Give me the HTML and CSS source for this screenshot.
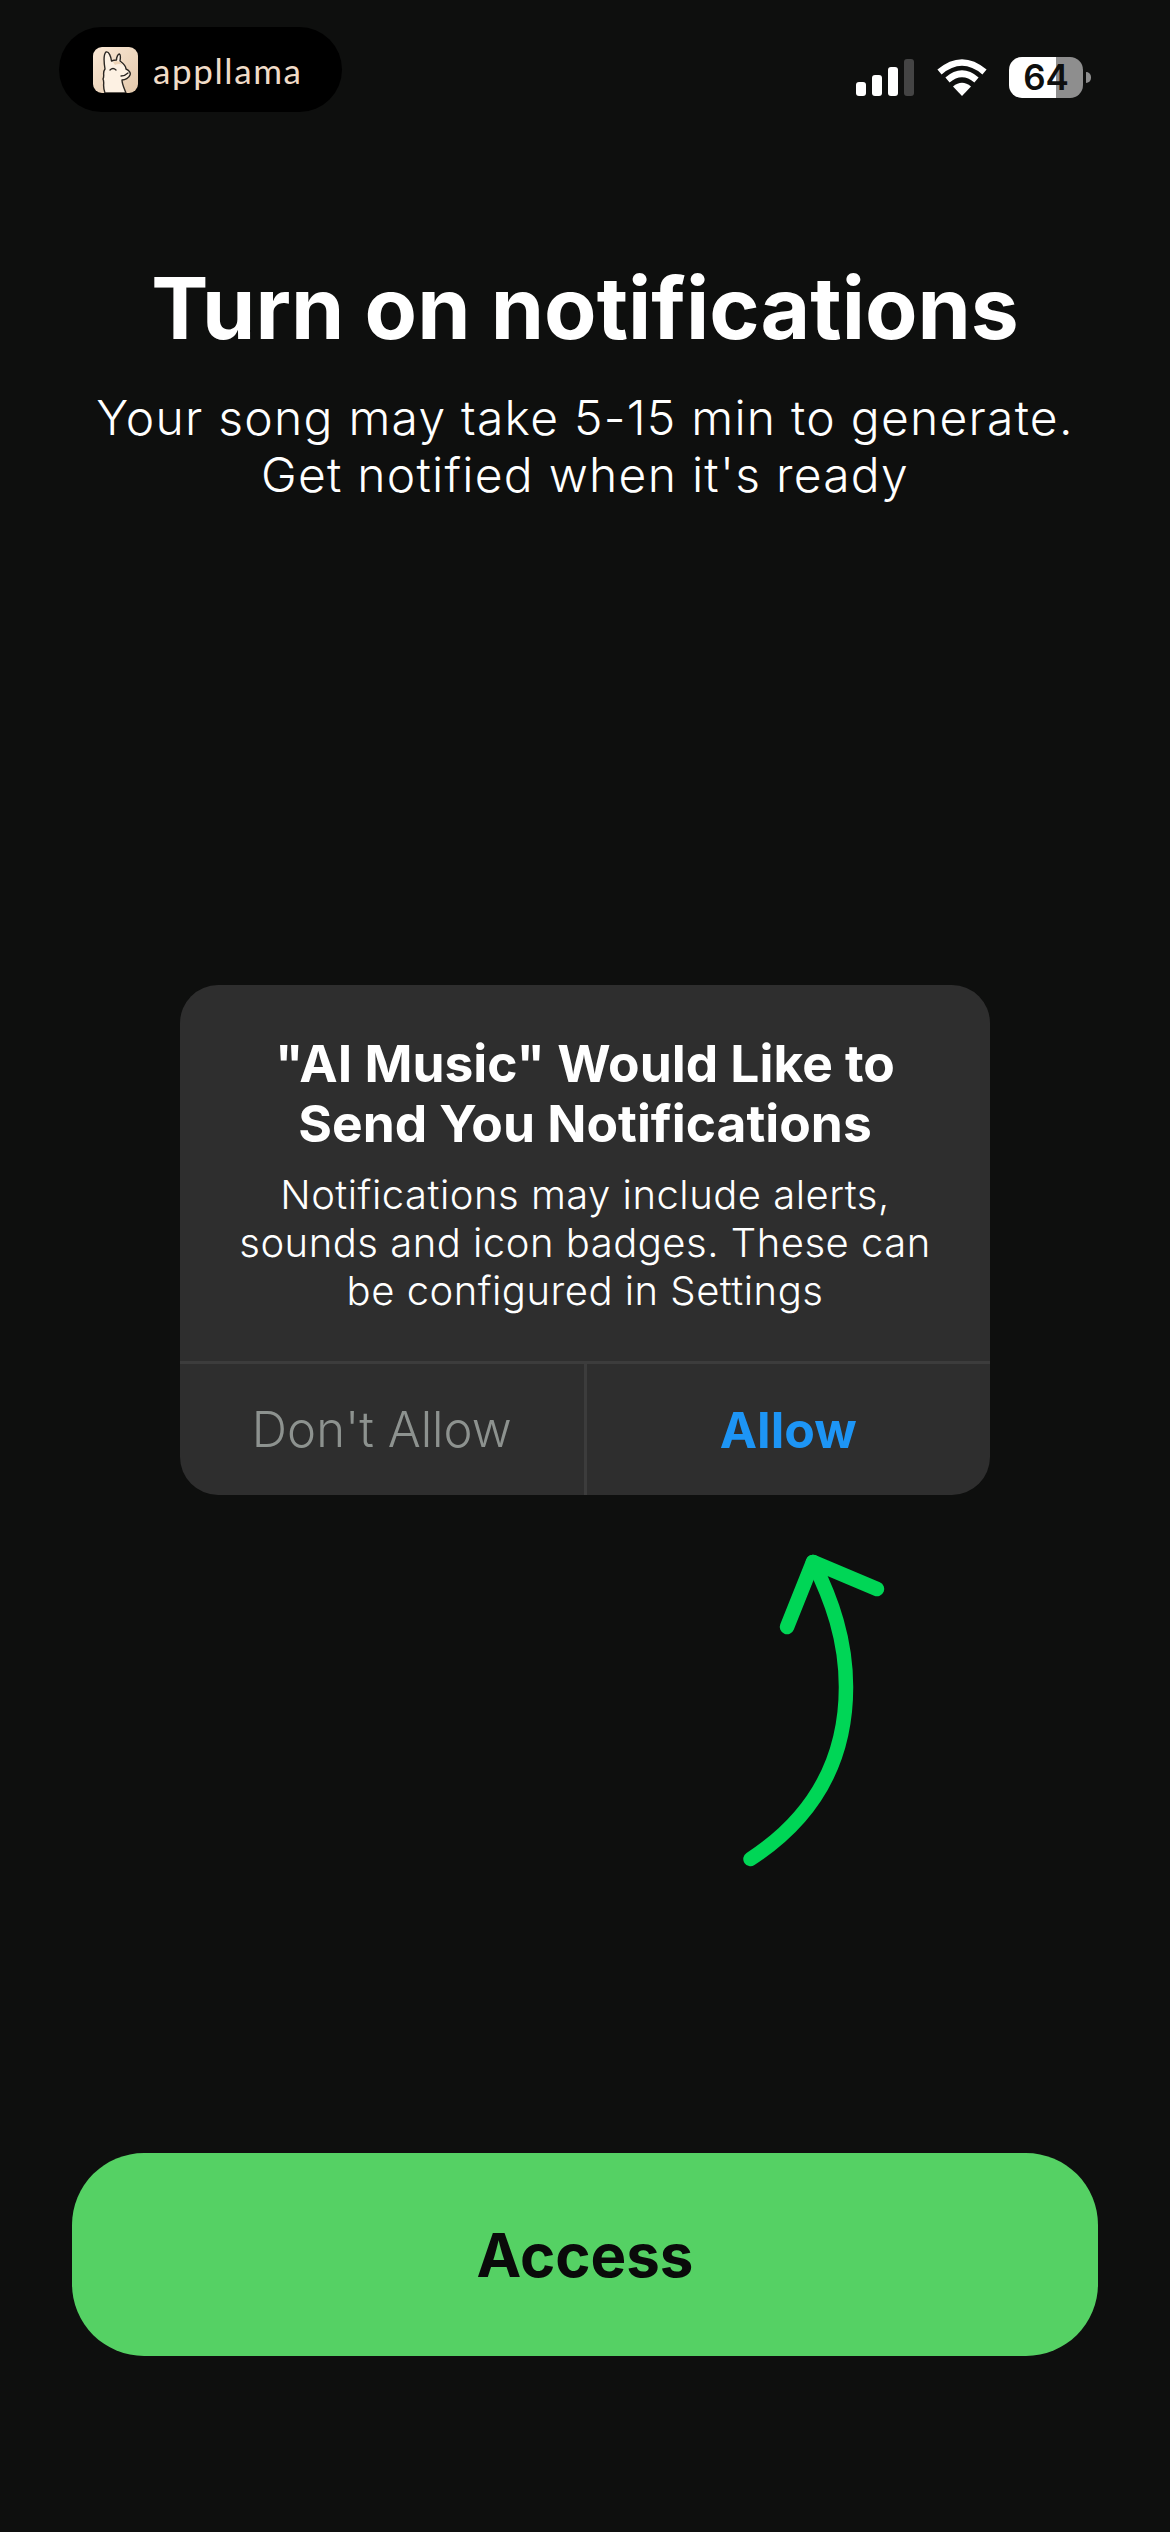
FILE: index.html
```html
<!DOCTYPE html>
<html lang="en">
<head>
    <meta charset="UTF-8">
    <meta name="viewport" content="width=device-width, initial-scale=1.0">
    <title>Turn on notifications</title>
    <link rel="stylesheet" href="styles.css">
</head>
<body>
    <header class="status-bar">
        <div class="brand">
            <svg class="brand-icon" viewBox="0 0 45 46">
                <defs>
                    <linearGradient id="tile" x1="0" y1="0" x2="1" y2="1">
                        <stop offset="0" stop-color="#fbe9d6"/>
                        <stop offset="1" stop-color="#e3c8ab"/>
                    </linearGradient>
                </defs>
                <rect width="45" height="46" rx="9" fill="url(#tile)"/>
                <path d="M12 46 C9 38 12 36 10 32 C12 28 9 26 12 22 C11 16 10 8 13 5 C16 4 18 10 18.5 14 C21 13 22 13 23.5 13 C23.5 10 25 7 26.5 7 C28 8 27.5 11 27 14 C31 17 33 20 33 22 C36 23 38 26 37 28 C36 31 32 33 29 33 C29 37 31 41 33 46 Z" fill="#fdf1e3" stroke="#2a2622" stroke-width="1.4" stroke-linejoin="round"/>
                <path d="M17 23 Q20 20 23 23 M28 29 Q32 29 35 26" fill="none" stroke="#2a2622" stroke-width="1.3" stroke-linecap="round"/>
                <path d="M20 15 Q25 12 30 18 Q26 16 22 18 Z" fill="#eed5b9"/>
            </svg>
            <span class="brand-name">appllama</span>
        </div>
        <div class="status-icons">
            <div class="signal">
                <span class="bar bar-1"></span>
                <span class="bar bar-2"></span>
                <span class="bar bar-3"></span>
                <span class="bar bar-4"></span>
            </div>
            <svg class="wifi" viewBox="0 0 50 37">
                <path d="M25 37 L16 27.5 Q25 20 34 27.5 Z" fill="#fff"/>
                <path d="M10.5 21 Q25 8.5 39.5 21" fill="none" stroke="#fff" stroke-width="6.5"/>
                <path d="M2.5 13 Q25 -6 47.5 13" fill="none" stroke="#fff" stroke-width="6.5"/>
            </svg>
            <div class="battery">
                <div class="battery-body">64</div>
                <div class="battery-cap"></div>
            </div>
        </div>
    </header>

    <main class="content">
        <h1 class="title">Turn on notifications</h1>
        <p class="subtitle">Your song may take 5-15 min to generate.<br>Get notified when it's ready</p>

        <div class="dialog">
            <div class="dialog-text">
                <h2 class="dialog-title">"AI Music" Would Like to<br>Send You Notifications</h2>
                <p class="dialog-body">Notifications may include alerts,<br>sounds and icon badges. These can<br>be configured in Settings</p>
            </div>
            <div class="dialog-actions">
                <div class="dialog-btn deny">Don't Allow</div>
                <div class="dialog-btn allow">Allow</div>
            </div>
        </div>

        <svg class="arrow" viewBox="0 0 220 360">
            <path d="M50.5 339 C115 297 146 240 146 167 C146 120 132 80 113 42" fill="none" stroke="#00d656" stroke-width="14.5" stroke-linecap="round"/>
            <path d="M87 107 L113 42 L177 69" fill="none" stroke="#00d656" stroke-width="14.5" stroke-linecap="round" stroke-linejoin="round"/>
        </svg>

        <div class="access-btn">Access</div>
    </main>
</body>
</html>
```

FILE: styles.css
```css
* {
    box-sizing: border-box;
}
body {
    width: 1170px;
    height: 2532px;
    margin: 0;
    padding: 0;
    overflow: hidden;
    background-color: #0e0f0e;
    color: #fff;
    font-family: Inter, "Liberation Sans", sans-serif;
}
.status-bar {
    display: flex;
    justify-content: space-between;
    align-items: flex-start;
    padding: 27px 79px 0 59px;
}
.brand {
    display: flex;
    align-items: center;
    gap: 15px;
    width: 283px;
    height: 85px;
    padding: 0 34px;
    background-color: #000;
    border-radius: 43px;
}
.brand-icon {
    width: 45px;
    height: 46px;
    flex-shrink: 0;
}
.brand-name {
    font-family: Lato, sans-serif;
    font-weight: 400;
    font-size: 35px;
    line-height: 46px;
    letter-spacing: 1.6px;
    color: #f0dcc8;
}
.status-icons {
    display: flex;
    align-items: center;
    height: 41px;
    margin-top: 30px;
}
.signal {
    display: flex;
    align-items: flex-end;
    gap: 6px;
    height: 37px;
    margin-right: 23px;
}
.bar {
    width: 10px;
    background-color: #fff;
    border-radius: 3px;
}
.bar-1 { height: 14px; }
.bar-2 { height: 21px; }
.bar-3 { height: 29px; }
.bar-4 { height: 37px; background-color: #444; }
.wifi {
    width: 50px;
    height: 37px;
    margin-right: 22px;
}
.battery {
    display: flex;
    align-items: center;
    gap: 3px;
}
.battery-body {
    width: 74px;
    height: 41px;
    border-radius: 13px;
    background: linear-gradient(to right, #fff 64%, #8e8e8e 64%);
    color: #0e0f0e;
    font-size: 35px;
    font-weight: 600;
    line-height: 41px;
    text-align: center;
}
.battery-cap {
    width: 5px;
    height: 11px;
    background-color: #8e8e8e;
    border-radius: 0 5px 5px 0;
}
.content {
    display: flex;
    flex-direction: column;
    align-items: center;
}
.title {
    margin: 146px 0 0;
    font-size: 85.7px;
    font-weight: 700;
    line-height: 100px;
}
.subtitle {
    margin: 31px 0 0;
    font-size: 48px;
    font-weight: 300;
    line-height: 57px;
    letter-spacing: 1.25px;
    text-align: center;
}
.dialog {
    width: 810px;
    height: 510px;
    margin-top: 482px;
    background-color: #2e2e2e;
    border-radius: 38px;
    overflow: hidden;
}
.dialog-text {
    height: 379px;
    padding-top: 48px;
    text-align: center;
    border-bottom: 3px solid #3c3c3c;
}
.dialog-title {
    margin: 0;
    font-size: 51.5px;
    font-weight: 700;
    line-height: 60px;
}
.dialog-body {
    margin: 18px 0 0;
    font-size: 40px;
    font-weight: 300;
    line-height: 48px;
    letter-spacing: 0.5px;
}
.dialog-actions {
    display: flex;
    height: 131px;
}
.dialog-btn {
    flex: 1;
    display: flex;
    align-items: center;
    justify-content: center;
}
.deny {
    font-size: 49px;
    font-weight: 300;
    color: #8d928f;
    border-right: 3px solid #3c3c3c;
}
.allow {
    font-size: 50px;
    font-weight: 700;
    color: #1d95f5;
}
.arrow {
    align-self: flex-start;
    width: 220px;
    height: 360px;
    margin: 25px 0 0 700px;
}
.access-btn {
    display: flex;
    align-items: center;
    justify-content: center;
    width: 1026px;
    height: 203px;
    margin-top: 273px;
    background-color: #55d164;
    border-radius: 72px;
    color: #0a0a0a;
    font-size: 60px;
    font-weight: 700;
}
```
